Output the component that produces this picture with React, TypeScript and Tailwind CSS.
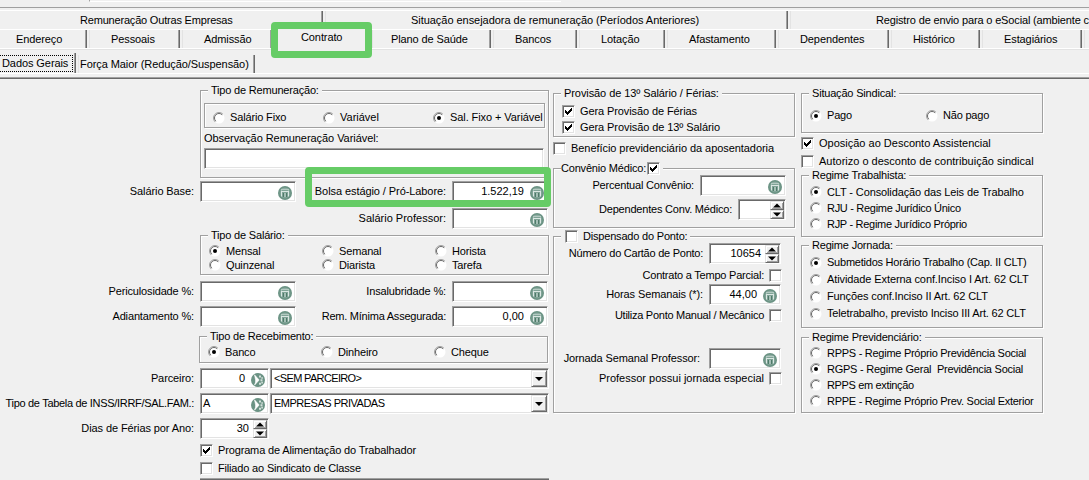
import type { ReactNode } from "react";
import clsx from "clsx";

const sunken =
  "border border-t-[#a0a0a0] border-l-[#a0a0a0] border-r-white border-b-white bg-white shadow-[inset_1px_1px_0_#696969,inset_-1px_-1px_0_#e3e3e3]";

const raised =
  "border border-t-[#e3e3e3] border-l-[#e3e3e3] border-r-[#696969] border-b-[#696969] bg-[#f0f0f0] shadow-[inset_1px_1px_0_#fff,inset_-1px_-1px_0_#a0a0a0]";

function CalcIcon() {
  return (
    <svg width="14" height="14" viewBox="0 0 14 14" className="mt-[2px] shrink-0">
      <circle cx="7" cy="7" r="7" fill="#6b9384" />
      <circle cx="7" cy="7" r="5.4" fill="#7fa396" />
      <path d="M3.5 4.5V3.3h7v1.2" fill="none" stroke="#c9dad4" strokeWidth=".9" />
      <path d="M3 5.5h8M3.5 5.5v5M10.5 5.5v5" fill="none" stroke="#dbe7e3" />
      <path d="M5.5 7v4M8.5 7v4" stroke="#4f7a6a" />
      <path d="M7 7v4" stroke="#c9dad4" />
    </svg>
  );
}

function LookupIcon() {
  return (
    <svg width="14" height="14" viewBox="0 0 14 14" className="mt-[2px] shrink-0">
      <circle cx="7" cy="7" r="7" fill="#6b9384" />
      <path d="M3.5 1.8 8.2 7 3.5 12.2Q5 9 4.6 7T3.5 1.8z" fill="#fff" stroke="#fff" strokeWidth=".6" />
      <path d="M8 2.5h2v2H8zM10.3 4.2h1.6v1.6h-1.6zM9.5 6.3h2v2h-2zM10.3 8.8h1.6v1.6h-1.6zM8 9.8h2v2H8z" fill="#d3e0db" />
    </svg>
  );
}

function Radio({ on }: { on?: boolean }) {
  return (
    <svg width="12" height="12" viewBox="0 0 12 12" className="shrink-0">
      <circle cx="6" cy="6" r="5.5" fill="#fff" />
      <path d="M2.1 9.9A5.5 5.5 0 0 1 9.9 2.1" fill="none" stroke="#a0a0a0" />
      <path d="M2.8 9.2A4.5 4.5 0 0 1 9.2 2.8" fill="none" stroke="#696969" />
      {on && <circle cx="6" cy="6" r="2" fill="#000" />}
    </svg>
  );
}

function Check({ on }: { on?: boolean }) {
  return (
    <span className={clsx("block size-[13px] shrink-0", sunken)}>
      {on && (
        <svg width="11" height="11" viewBox="0 0 11 11" shapeRendering="crispEdges">
          <path d="M2 4v3l2 2 5-5V1L4 6z" fill="#000" />
        </svg>
      )}
    </span>
  );
}

function Option({ on, label, className }: { on?: boolean; label: string; className?: string }) {
  return (
    <div className={clsx("flex items-center gap-[5px]", className)}>
      <Radio on={on} />
      <span>{label}</span>
    </div>
  );
}

function CheckRow({ on, label, className }: { on?: boolean; label: string; className?: string }) {
  return (
    <div className={clsx("flex h-[13px] items-center gap-[5px]", className)}>
      <Check on={on} />
      <span>{label}</span>
    </div>
  );
}

function Group({ title, className, children }: { title: ReactNode; className?: string; children: ReactNode }) {
  return (
    <div
      className={clsx(
        "flex flex-col border border-[#a0a0a0] shadow-[1px_1px_0_#fff,inset_1px_1px_0_#fff]",
        className,
      )}
    >
      <div className="-mt-[7px] ml-[7px] flex h-[13px] items-center self-start bg-[#f0f0f0] px-[3px] tracking-[-0.19px]">
        {title}
      </div>
      {children}
    </div>
  );
}

function Field({ value, icon, className }: { value?: string; icon?: "calc" | "lookup"; className?: string }) {
  return (
    <div className={clsx("flex h-[21px] shrink-0 items-center justify-end gap-[6px] pr-[3px]", sunken, className)}>
      <span>{value}</span>
      {icon === "calc" && <CalcIcon />}
      {icon === "lookup" && <LookupIcon />}
    </div>
  );
}

function Spin({ value, className }: { value?: string; className?: string }) {
  return (
    <div className={clsx("flex h-[21px] shrink-0 items-center justify-end gap-[4px] pr-px", sunken, className)}>
      <span>{value}</span>
      <div className="flex w-[14px] flex-col">
        {["M2 5.5h8L6 1.5z", "M2 1.5h8L6 5.5z"].map((d) => (
          <div key={d} className={clsx("h-[9px]", raised)}>
            <svg width="12" height="7" viewBox="0 0 12 7">
              <path d={d} fill="#000" />
            </svg>
          </div>
        ))}
      </div>
    </div>
  );
}

function Combo({ value, className }: { value: string; className: string }) {
  return (
    <div className={clsx("ml-px flex h-[21px] w-[279px] items-center justify-between p-px pl-[3px]", sunken)}>
      <span className={className}>{value}</span>
      <div className={clsx("flex h-[17px] w-[16px] items-center justify-center", raised)}>
        <svg width="8" height="4" viewBox="0 0 8 4">
          <path d="M0 0h8L4 4z" fill="#000" />
        </svg>
      </div>
    </div>
  );
}

function Label({ children, className }: { children: string; className?: string }) {
  return <div className={clsx("shrink-0 text-right", className)}>{children}</div>;
}

function Tab({ label, className }: { label?: string; className: string }) {
  return (
    <div
      className={clsx(
        "flex h-[18px] shrink-0 items-center border-r border-[#696969] shadow-[inset_-1px_0_0_#a0a0a0,inset_2px_0_0_#f0f0f0,inset_3px_0_0_#e3e3e3]",
        className,
      )}
    >
      {label}
    </div>
  );
}

function Tabs() {
  return (
    <div className="flex h-[79px] flex-col">
      <div className="ml-[89px] h-[2px] w-[472px] border-b border-l border-b-white border-l-[#a0a0a0]" />
      <div className="mt-[5px] h-px bg-[#a0a0a0]" />
      <div className="mt-[2px] h-px bg-white" />
      <div className="flex">
        <Tab label="Remuneração Outras Empresas" className="-ml-[4px] w-[327px] pl-[84px] tracking-[-0.19px]" />
        <Tab
          label="Situação ensejadora de remuneração (Períodos Anteriores)"
          className="w-[465px] pl-[88px] tracking-[-0.04px]"
        />
        <Tab label="Registro de envio para o eSocial (ambiente c" className="w-[420px] pl-[88px] tracking-[-0.15px]" />
      </div>
      <div className="h-px bg-white" />
      <div className="flex tracking-[-0.1px]">
        <Tab label="Endereço" className="-ml-[4px] w-[91px] pl-[20px]" />
        <Tab label="Pessoais" className="w-[93px] pl-[24px]" />
        <Tab label="Admissão" className="w-[92px] pl-[24px]" />
        {/* the open tab hides the rules above and below it */}
        <div className="relative -mt-px -mb-[3px] flex h-[22px] w-[98px] shrink-0 items-center bg-[#f0f0f0] pb-[6px] pl-[29px]">
          Contrato
        </div>
        <Tab label="Plano de Saúde" className="w-[121px] pl-[21px]" />
        <Tab label="Bancos" className="w-[86px] pl-[24px]" />
        <Tab label="Lotação" className="w-[88px] pl-[24px]" />
        <Tab label="Afastamento" className="w-[111px] pl-[24px]" />
        <Tab label="Dependentes" className="w-[113px] pl-[24px]" />
        <Tab label="Histórico" className="w-[91px] pl-[24px]" />
        <Tab label="Estagiários" className="w-[102px] pl-[24px]" />
        <Tab className="w-[60px]" />
      </div>
      <div className="h-px bg-white" />
      <div className="h-px bg-[#e3e3e3]" />
      <div className="mt-[3px] flex h-[20px] items-end tracking-[-0.08px]">
        <div className="flex h-full w-[76px] items-start border-r border-[#696969] pt-[2px] shadow-[inset_-1px_0_0_#a0a0a0]">
          <div className="flex h-[17px] w-[73px] items-center border border-l-0 border-dotted border-black pb-px pl-[2px]">
            Dados Gerais
          </div>
        </div>
        <Tab label="Força Maior (Redução/Suspensão)" className="w-[179px] pl-[4px]" />
      </div>
      <div className="h-px bg-white" />
      <div className="mt-[3px] h-px bg-[#a0a0a0]" />
      <div className="h-px bg-[#696969]" />
    </div>
  );
}

function LeftColumn() {
  return (
    <div className="w-[549px] shrink-0">
      <Group title="Tipo de Remuneração:" className="mt-[11px] ml-[200px] h-[88px] w-[349px]">
        <div className="mt-[6px] ml-[3px] flex h-[25px] w-[341px] items-center border border-[#a0a0a0] pt-[4px] pl-[8px] shadow-[1px_1px_0_#fff,inset_1px_1px_0_#fff]">
          <Option label="Salário Fixo" className="w-[110px] tracking-[-0.15px]" />
          <Option label="Variável" className="w-[110px]" />
          <Option on label="Sal. Fixo + Variável" className="tracking-[-0.08px]" />
        </div>
        <div className="mt-[4px] ml-[3px] h-[13px] tracking-[-0.06px]">Observação Remuneração Variável:</div>
        <div className={clsx("mt-[3px] ml-[3px] h-[21px] w-[340px] shrink-0", sunken)} />
      </Group>
      <div className="relative mt-[3px] flex items-center">
        <Label className="mr-[6px] w-[194px] tracking-[-0.1px]">Salário Base:</Label>
        <Field icon="calc" className="w-[96px]" />
        <Label className="mr-[6px] w-[150px] tracking-[-0.08px]">Bolsa estágio / Pró-Labore:</Label>
        <Field icon="calc" value="1.522,19" className="w-[96px]" />
        <div className="absolute -top-[14px] left-[305px] h-[40px] w-[246px] rounded-[4px] border-7 border-[#66cc66]" />
      </div>
      <div className="mt-[6px] flex items-center">
        <Label className="mr-[6px] w-[446px]">Salário Professor:</Label>
        <Field icon="calc" className="w-[96px]" />
      </div>
      <Group title="Tipo de Salário:" className="mt-[6px] ml-[200px] h-[40px] w-[349px]">
        <div className="mt-[2px] ml-[8px] grid grid-cols-[113px_113px_100px] grid-rows-[14px_14px] items-center tracking-[-0.15px]">
          <Option on label="Mensal" />
          <Option label="Semanal" />
          <Option label="Horista" />
          <Option label="Quinzenal" />
          <Option label="Diarista" />
          <Option label="Tarefa" />
        </div>
      </Group>
      <div className="mt-[6px] flex items-center">
        <Label className="mr-[6px] w-[194px] tracking-[-0.15px]">Periculosidade %:</Label>
        <Field icon="calc" className="w-[96px]" />
        <Label className="mr-[6px] w-[150px] tracking-[-0.14px]">Insalubridade %:</Label>
        <Field icon="calc" className="w-[96px]" />
      </div>
      <div className="mt-[4px] flex items-center">
        <Label className="mr-[6px] w-[194px] tracking-[-0.15px]">Adiantamento %:</Label>
        <Field icon="calc" className="w-[96px]" />
        <Label className="mr-[6px] w-[150px] tracking-[-0.23px]">Rem. Mínima Assegurada:</Label>
        <Field icon="calc" value="0,00" className="w-[96px]" />
      </div>
      <Group title="Tipo de Recebimento:" className="mt-[9px] ml-[199px] h-[27px] w-[349px]">
        <div className="mt-[2px] ml-[8px] grid grid-cols-[113px_113px_100px] grid-rows-[14px] items-center tracking-[-0.15px]">
          <Option on label="Banco" />
          <Option label="Dinheiro" />
          <Option label="Cheque" />
        </div>
      </Group>
      <div className="mt-[5px] flex items-center">
        <Label className="mr-[6px] w-[194px] tracking-[-0.1px]">Parceiro:</Label>
        <Field icon="lookup" value="0" className="w-[69px]" />
        <Combo value="<SEM PARCEIRO>" className="tracking-[-0.65px]" />
      </div>
      <div className="mt-[4px] flex items-center">
        <Label className="mr-[6px] w-[194px] tracking-[-0.31px]">Tipo de Tabela de INSS/IRRF/SAL.FAM.:</Label>
        <div className={clsx("flex h-[21px] w-[69px] items-center justify-between pr-[3px] pl-[2px]", sunken)}>
          <span>A</span>
          <LookupIcon />
        </div>
        <Combo value="EMPRESAS PRIVADAS" className="tracking-[-0.5px]" />
      </div>
      <div className="mt-[4px] flex items-center">
        <Label className="mr-[6px] w-[194px] tracking-[-0.1px]">Dias de Férias por Ano:</Label>
        <Spin value="30" className="w-[69px]" />
      </div>
      <CheckRow
        on
        label="Programa de Alimentação do Trabalhador"
        className="mt-[5px] ml-[200px] tracking-[-0.15px]"
      />
      <CheckRow label="Filiado ao Sindicato de Classe" className="mt-[5px] ml-[200px] tracking-[-0.17px]" />
      <div className="mt-[3px] ml-[200px] h-[2px] w-[349px] border-t border-[#a0a0a0] bg-[#696969]" />
    </div>
  );
}

function MiddleColumn() {
  return (
    <div className="ml-[4px] w-[242px] shrink-0">
      <Group
        title={<span className="tracking-[-0.08px]">Provisão de 13º Salário / Férias:</span>}
        className="mt-[14px] h-[44px]"
      >
        <CheckRow on label="Gera Provisão de Férias" className="mt-[5px] ml-[8px] tracking-[-0.1px]" />
        <CheckRow on label="Gera Provisão de 13º Salário" className="mt-[3px] ml-[8px] tracking-[-0.08px]" />
      </Group>
      <CheckRow label="Benefício previdenciário da aposentadoria" className="mt-[5px] tracking-[-0.06px]" />
      <Group
        title={
          <>
            <span className="mr-px -ml-[3px]">Convênio Médico:</span>
            <Check on />
          </>
        }
        className="mt-[13px] h-[60px]"
      >
        <div className="flex items-center justify-end pr-[8px]">
          <Label className="mr-[6px] tracking-[-0.18px]">Percentual Convênio:</Label>
          <Field icon="calc" className="w-[86px]" />
        </div>
        <div className="mt-[3px] flex items-center justify-end pr-[8px]">
          <Label className="mr-[6px] tracking-[-0.2px]">Dependentes Conv. Médico:</Label>
          <Spin className="w-[48px]" />
        </div>
      </Group>
      <Group
        title={
          <div className="ml-px flex items-center gap-[5px]">
            <Check />
            Dispensado do Ponto:
          </div>
        }
        className="mt-[8px] h-[177px]"
      >
        <div className="flex items-center justify-end pr-[13px]">
          <Label className="mr-[6px] tracking-[-0.25px]">Número do Cartão de Ponto:</Label>
          <Spin value="10654" className="w-[72px]" />
        </div>
        <div className="mt-[5px] flex h-[13px] items-center justify-end gap-[5px] pr-[12px]">
          <Label className="tracking-[-0.22px]">Contrato a Tempo Parcial:</Label>
          <Check />
        </div>
        <div className="mt-[2px] flex items-center justify-end pr-[13px]">
          <Label className="mr-[6px] tracking-[-0.12px]">Horas Semanais (*):</Label>
          <Field icon="calc" value="44,00" className="w-[72px]" />
        </div>
        <div className="mt-[4px] flex h-[13px] items-center justify-end gap-[5px] pr-[12px]">
          <Label className="tracking-[-0.26px]">Utiliza Ponto Manual / Mecânico</Label>
          <Check />
        </div>
        <div className="mt-[26px] flex items-center justify-end pr-[13px]">
          <Label className="mr-[9px] tracking-[-0.12px]">Jornada Semanal Professor:</Label>
          <Field icon="calc" className="w-[72px]" />
        </div>
        <div className="mt-[3px] flex h-[13px] items-center justify-end gap-[5px] pr-[12px]">
          <Label>Professor possui jornada especial</Label>
          <Check />
        </div>
      </Group>
    </div>
  );
}

function RightColumn() {
  return (
    <div className="ml-[6px] w-[242px] shrink-0">
      <Group title="Situação Sindical:" className="mt-[14px] h-[40px]">
        <div className="mt-[9px] ml-[8px] flex h-[13px] items-center tracking-[-0.2px]">
          <Option on label="Pago" className="w-[116px]" />
          <Option label="Não pago" />
        </div>
      </Group>
      <CheckRow on label="Oposição ao Desconto Assistencial" className="mt-[4px]" />
      <CheckRow label="Autorizo o desconto de contribuição sindical" className="mt-[5px]" />
      <Group title="Regime Trabalhista:" className="mt-[7px] h-[62px]">
        <div className="mt-[2px] ml-[8px] flex flex-col">
          <Option on label="CLT - Consolidação das Leis de Trabalho" className="h-[16px] tracking-[-0.12px]" />
          <Option label="RJU - Regime Jurídico Único" className="h-[16px] tracking-[-0.3px]" />
          <Option label="RJP - Regime Jurídico Próprio" className="h-[16px] tracking-[-0.29px]" />
        </div>
      </Group>
      <Group title="Regime Jornada:" className="mt-[8px] h-[83px]">
        <div className="mt-[2px] ml-[8px] flex flex-col">
          <Option on label="Submetidos Horário Trabalho (Cap. II CLT)" className="h-[17px] tracking-[-0.23px]" />
          <Option label="Atividade Externa conf.Inciso I Art. 62 CLT" className="h-[17px] tracking-[-0.1px]" />
          <Option label="Funções conf.Inciso II Art. 62 CLT" className="h-[17px] tracking-[-0.12px]" />
          <Option label="Teletrabalho, previsto Inciso III Art. 62 CLT" className="h-[17px] tracking-[-0.17px]" />
        </div>
      </Group>
      <Group title="Regime Previdenciário:" className="mt-[9px] h-[76px]">
        <div className="mt-px ml-[8px] flex flex-col tracking-[-0.27px]">
          <Option label="RPPS - Regime Próprio Previdência Social" className="h-[16px]" />
          <Option on label={"RGPS - Regime Geral \u00a0Previdência Social"} className="h-[16px] tracking-[-0.24px]" />
          <Option label="RPPS em extinção" className="h-[16px] tracking-[-0.35px]" />
          <Option label="RPPE - Regime Próprio Prev. Social Exterior" className="h-[16px]" />
        </div>
      </Group>
    </div>
  );
}

export default function App() {
  return (
    <div className="relative h-[480px] w-[1089px] overflow-hidden bg-[#f0f0f0] font-['Liberation_Sans',Arial,sans-serif] text-[11px] leading-[13px] whitespace-nowrap text-black">
      <Tabs />
      <div className="flex">
        <LeftColumn />
        <MiddleColumn />
        <RightColumn />
      </div>
      <div className="absolute top-[22px] left-[271px] h-[36px] w-[101px] rounded-[4px] border-7 border-[#66cc66]" />
    </div>
  );
}
